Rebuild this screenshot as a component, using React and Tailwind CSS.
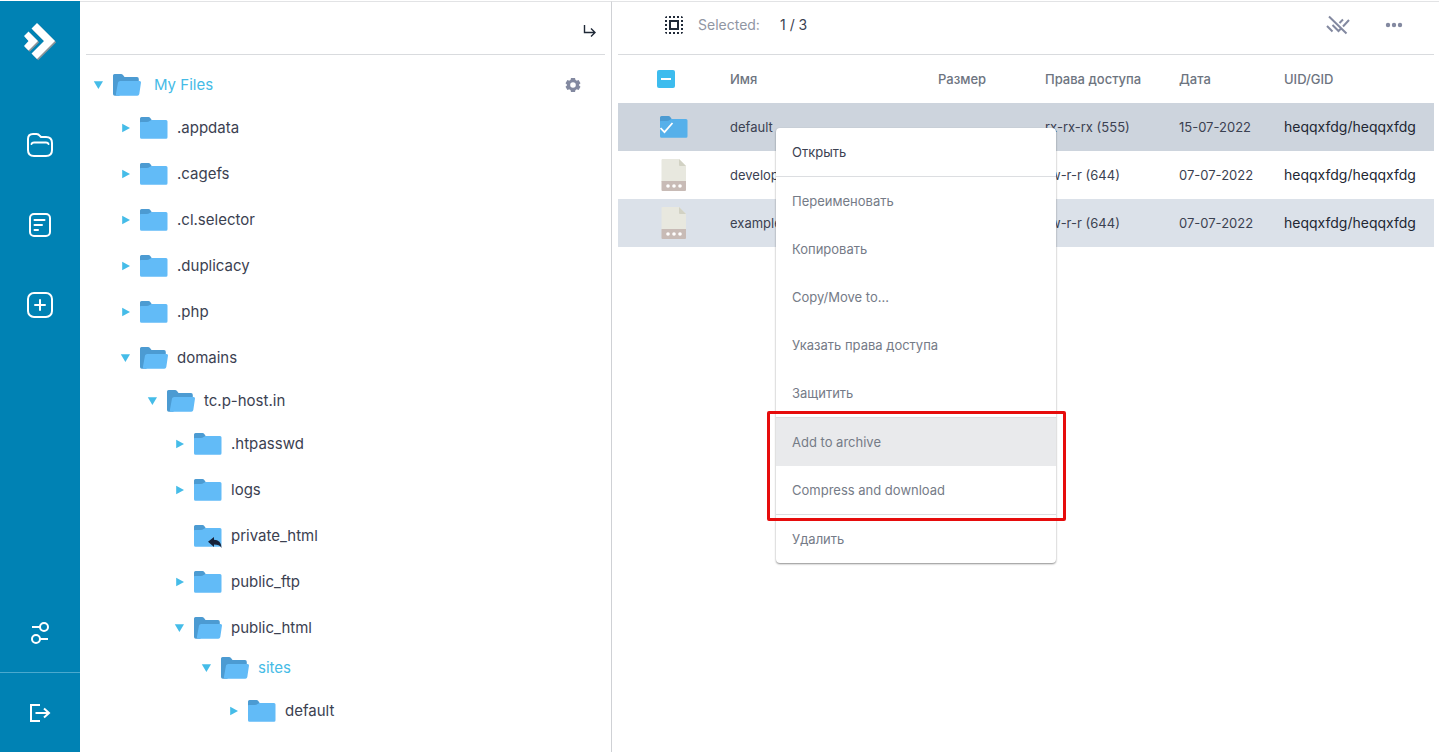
import { MdSelectAll } from "react-icons/md";

const tree = {
  name: "My Files",
  active: true,
  children: [
    { name: ".appdata" },
    { name: ".cagefs" },
    { name: ".cl.selector" },
    { name: ".duplicacy" },
    { name: ".php" },
    {
      name: "domains",
      children: [
        {
          name: "tc.p-host.in",
          children: [
            { name: ".htpasswd" },
            { name: "logs" },
            { name: "private_html", link: true },
            { name: "public_ftp" },
            {
              name: "public_html",
              tight: true,
              children: [{ name: "sites", active: true, children: [{ name: "default" }] }],
            },
          ],
        },
      ],
    },
  ],
};

const rows = [
  { name: "default", mode: "rx-rx-rx (555)", date: "15-07-2022", owner: "heqqxfdg/heqqxfdg", folder: true, bg: "bg-[#cdd4dd]" },
  { name: "develop", mode: "rw-r-r (644)", date: "07-07-2022", owner: "heqqxfdg/heqqxfdg", bg: "bg-white" },
  { name: "example", mode: "rw-r-r (644)", date: "07-07-2022", owner: "heqqxfdg/heqqxfdg", bg: "bg-[#dbe1e9]" },
];

function ClosedFolder({ link, checked }) {
  return (
    <svg className="h-6 w-7 shrink-0" viewBox="0 0 28 24" aria-hidden="true">
      <path d="M0 8V2.5A1.5 1.5 0 0 1 1.5 1H8.5Q9.6 1 10.3 2L12 4.5 10 8Z" fill="#4c9bd2" />
      <path
        d="M0 6.5Q0 5.9 .8 5.9H7Q8.6 5.9 9.6 5L10.4 4.4Q10.8 4 11.8 4H26Q27.5 4 27.5 5.5V21.2Q27.5 22.7 26 22.7H1.5Q0 22.7 0 21.2Z"
        fill={checked ? "#56b0ea" : "#62bbf7"}
      />
      {checked && <path d="M.5 13l4 4.2L12.5 8" fill="none" stroke="#fff" strokeWidth="1.8" />}
      {link && (
        <path d="M14 17.8L20 13v2.8c4.5.1 7.3 2.6 7.6 8.2-1.600-2.500-3.800-3.400-7.600-3.400V23Z" fill="#17233a" />
      )}
    </svg>
  );
}

function OpenFolder() {
  return (
    <svg className="h-6 w-7 shrink-0 overflow-visible" viewBox="0 0 28 24" aria-hidden="true">
      <path d="M0 21V2.500A1.500 1.500 0 0 1 1.500 1H8Q9.200 1 10 2L11.500 4H24Q25.800 4 25.800 6V10L6 22.700H1.800Q0 22.700 0 21Z" fill="#4c9bd2" />
      <path d="M7.200 7.900H26.500Q28.300 7.900 28 9.600L26.300 21Q26 22.700 24.300 22.700H4.200Q2.600 22.700 2.900 21L5 9.600Q5.400 7.900 7.200 7.900Z" fill="#62bbf7" />
    </svg>
  );
}

function FileIcon() {
  return (
    <svg className="h-8 w-7" viewBox="0 0 28 32" aria-hidden="true">
      <path d="M2.500 0H19L26 7V23H1.500V1Q1.500 0 2.500 0Z" fill="#e8e8df" />
      <path d="M19 0L26 7H20Q19 7 19 6Z" fill="#d2d2c4" />
      <path d="M1.500 22H26V31Q26 32 25 32H2.500Q1.500 32 1.500 31Z" fill="#c8bbb6" />
      <g fill="#fff">
        <circle cx="8" cy="27" r="1.800" />
        <circle cx="14" cy="27" r="1.800" />
        <circle cx="20" cy="27" r="1.800" />
      </g>
    </svg>
  );
}

function Caret({ open }) {
  return (
    <svg className="size-3" viewBox="0 0 12 12" aria-hidden="true">
      <path d={open ? "M.8 2.200H10L5.400 10Z" : "M2.200 1.700V10.300L10 6Z"} fill="#45bce8" />
    </svg>
  );
}

function TreeNode({ node, root = false }) {
  const open = Boolean(node.children);
  return (
    <li>
      <div className="flex h-10 items-center">
        {node.link ? (
          <span className="mr-2 w-3" />
        ) : (
          <button type="button" aria-label={`Toggle ${node.name}`} className="mr-2 w-3">
            <Caret open={open} />
          </button>
        )}
        {open ? <OpenFolder /> : <ClosedFolder link={node.link} />}
        <a
          href="#"
          className={`text-[15px] leading-5 ${root ? "ml-[13px]" : "ml-[9px]"} ${node.active ? "text-[#45bbe6]" : "text-[#3b4151]"}`}
        >
          {node.name}
        </a>
        {root && (
          <button type="button" aria-label="Tree settings" className="mr-6 ml-auto">
            <svg className="size-4" viewBox="0 0 16 16" aria-hidden="true">
              <path
                fillRule="evenodd"
                fill="#8389a0"
                d="M6 1H10L10.500 3Q11.200 3.300 11.700 3.700L13.600 3.100 15.500 6.300 14.100 7.600V8.400L15.500 9.700 13.600 12.900 11.700 12.300Q11.200 12.700 10.500 13L10 15H6L5.500 13Q4.800 12.700 4.300 12.300L2.400 12.900.5 9.700 1.900 8.400V7.600L.5 6.300 2.400 3.100 4.300 3.700Q4.800 3.300 5.500 3ZM8 5.200A2.800 2.800 0 1 0 8 10.800 2.800 2.800 0 1 0 8 5.200Z"
              />
            </svg>
          </button>
        )}
      </div>
      {open && (
        <ul className={`flex flex-col gap-[6px] pl-[27px] ${node.tight ? "" : "pt-[3px]"}`}>
          {node.children.map((child) => (
            <TreeNode key={child.name} node={child} />
          ))}
        </ul>
      )}
    </li>
  );
}

function Sidebar() {
  const stroke = { fill: "none", stroke: "#fff", strokeWidth: 2, strokeLinecap: "round", strokeLinejoin: "round" };
  return (
    <nav className="flex w-20 shrink-0 flex-col bg-[#0082b4]">
      <a href="#" aria-label="Home" className="flex h-20 items-center justify-center">
        <svg className="size-10" viewBox="0 0 40 40" aria-hidden="true">
          <g fill="#8b9499" transform="translate(1.200 1.200)">
            <path d="M11.500 7.500L17 2 35 20 17 38 11.500 32.500 24 20Z" />
            <path d="M4 15L8.500 10.500 18 20 8.500 29.500 4 25 8.500 20Z" />
          </g>
          <g fill="#fff">
            <path d="M11.500 7.500L17 2 35 20 17 38 11.500 32.500 24 20Z" />
            <path d="M4 15L8.500 10.500 18 20 8.500 29.500 4 25 8.500 20Z" />
          </g>
        </svg>
      </a>
      <div className="flex flex-col pt-6">
        <button type="button" aria-label="Files" className="flex h-20 items-center justify-center">
          <svg className="size-7" viewBox="0 0 28 28" aria-hidden="true" {...stroke}>
            <path d="M2 8Q2 3 7 3H10.500Q12.500 3 14 5L15 6H20Q26 6 26 12V19Q26 25 20 25H8Q2 25 2 19Z" />
            <path d="M5.500 13Q6 11.500 8 11.500H20Q22 11.500 22.500 13" />
          </svg>
        </button>
        <button type="button" aria-label="Notes" className="flex h-20 items-center justify-center">
          <svg className="size-7" viewBox="0 0 28 28" aria-hidden="true" {...stroke}>
            <rect x="4" y="3" width="20" height="22" rx="4" />
            <path d="M8.500 9H18.500M8.500 14H16M8.500 19H12" />
          </svg>
        </button>
        <button type="button" aria-label="Add" className="flex h-20 items-center justify-center">
          <svg className="size-7" viewBox="0 0 28 28" aria-hidden="true" {...stroke}>
            <rect x="2" y="2" width="24" height="24" rx="6" />
            <path d="M14 9V19M9 14H19" />
          </svg>
        </button>
      </div>
      <button type="button" aria-label="Options" className="mt-auto flex h-20 items-center justify-center border-b border-[#4aa9ce]">
        <svg className="size-6" viewBox="0 0 24 24" aria-hidden="true" {...stroke} strokeLinecap="butt">
          <circle cx="16" cy="6" r="4" />
          <circle cx="8" cy="18" r="4" />
          <path d="M4 6H12M12 18H20" />
        </svg>
      </button>
      <button type="button" aria-label="Log out" className="flex h-[79px] items-center justify-center">
        <svg className="size-6" viewBox="0 0 24 24" aria-hidden="true" {...stroke} strokeLinecap="butt" strokeLinejoin="miter">
          <path d="M12 4H3V20H12M7.500 12H21M16 7.500L21 12 16 16.500" />
        </svg>
      </button>
    </nav>
  );
}

function MenuItem({ children, className = "text-[#757b87]" }) {
  return (
    <button type="button" role="menuitem" className={`flex h-12 w-full items-center px-4 text-left ${className}`}>
      {children}
    </button>
  );
}

function ContextMenu() {
  return (
    <div
      role="menu"
      className="absolute top-[73px] left-[158px] w-[280px] rounded-[4px] bg-white text-[13px] leading-4 shadow-[0_1px_2px_rgba(0,0,0,0.45)]"
    >
      <MenuItem className="text-[#3b4151]">Открыть</MenuItem>
      <div className="border-t border-[#dcdee1]">
        <MenuItem>Переименовать</MenuItem>
        <MenuItem>Копировать</MenuItem>
        <MenuItem>Copy/Move to...</MenuItem>
        <MenuItem>Указать права доступа</MenuItem>
        <MenuItem>Защитить</MenuItem>
      </div>
      <div className="relative border-t border-[#dcdee1]">
        <MenuItem className="bg-[#e9eaec] text-[#757b87]">Add to archive</MenuItem>
        <MenuItem>Compress and download</MenuItem>
        <span className="pointer-events-none absolute -top-[7px] -right-[10px] -bottom-[7px] -left-[9px] rounded-[2px] border-[3px] border-[#e60c0c]" />
      </div>
      <div className="border-t border-[#dcdee1]">
        <MenuItem>Удалить</MenuItem>
      </div>
    </div>
  );
}

export default function App() {
  return (
    <div className="flex min-h-screen bg-white pt-px font-['Inter','Noto_Sans',sans-serif] text-[#3b4151]">
      <Sidebar />
      <aside className="w-[532px] shrink-0 border-t border-r border-t-[#e2e3e5] border-r-[#cfd1d5] px-[6px]">
        <header className="flex h-[53px] items-center justify-end border-b border-[#d9dbde] pt-[6px] pr-[7px]">
          <button type="button" aria-label="Collapse tree">
            <svg className="size-4" viewBox="0 0 16 16" fill="none" stroke="#1f2937" strokeWidth="1.400" aria-hidden="true">
              <path d="M2.500 2V9.500H13M9 5.500L13 9.500 9 13.500" />
            </svg>
          </button>
        </header>
        <ul className="pt-[10px] pl-[7px]">
          <TreeNode node={tree} root />
        </ul>
      </aside>
      <main className="min-w-0 grow border-t border-[#e2e3e5] pr-[5px] pl-[6px]">
        <header className="flex h-[53px] items-center border-b border-[#d9dbde] pb-[6px] pl-11 text-sm leading-5">
          <button type="button" aria-label="Select all">
            <MdSelectAll className="size-6 text-[#1f2937]" />
          </button>
          <span className="ml-3 w-[82px] text-[#9096a3]">Selected:</span>
          <span>1 / 3</span>
          <button type="button" aria-label="Clear selection" className="ml-auto">
            <svg className="size-6" viewBox="0 0 24 24" fill="none" stroke="#8389a0" strokeWidth="2" aria-hidden="true">
              <path d="M3 3.500L20.500 20.500M1 13L6.500 18.500M6.500 12L12.500 18 15.500 15M13.500 10L17 6.500M17 13.500L23 7" />
            </svg>
          </button>
          <button type="button" aria-label="More actions" className="mr-7 ml-8">
            <svg className="size-6" viewBox="0 0 24 24" fill="#8389a0" aria-hidden="true">
              <circle cx="6" cy="12" r="2.200" />
              <circle cx="12" cy="12" r="2.200" />
              <circle cx="18" cy="12" r="2.200" />
            </svg>
          </button>
        </header>
        <div className="relative">
          <table className="w-full table-fixed text-left text-[13px] leading-4">
            <colgroup>
              <col className="w-28" />
              <col />
              <col className="w-[107px]" />
              <col className="w-[134px]" />
              <col className="w-[105px]" />
              <col className="w-[150px]" />
            </colgroup>
            <thead>
              <tr className="h-12 text-[#6d7480]">
                <th className="pl-[39px]">
                  <button type="button" role="checkbox" aria-checked="mixed" aria-label="Select all files" className="flex size-[18px] items-center justify-center rounded-[2px] bg-[#3dbcee]">
                    <span className="h-[2px] w-[10px] bg-white" />
                  </button>
                </th>
                <th className="font-medium">Имя</th>
                <th className="font-medium">Размер</th>
                <th className="font-medium">Права доступа</th>
                <th className="font-medium">Дата</th>
                <th className="font-medium">UID/GID</th>
              </tr>
            </thead>
            <tbody>
              {rows.map((row) => (
                <tr key={row.name} className={`h-12 ${row.bg}`}>
                  <td className="pl-[42px]">{row.folder ? <ClosedFolder checked /> : <FileIcon />}</td>
                  <td>{row.name}</td>
                  <td />
                  <td>{row.mode}</td>
                  <td>{row.date}</td>
                  <td className="text-sm leading-4 text-[#222733]">{row.owner}</td>
                </tr>
              ))}
            </tbody>
          </table>
          <ContextMenu />
        </div>
      </main>
    </div>
  );
}
